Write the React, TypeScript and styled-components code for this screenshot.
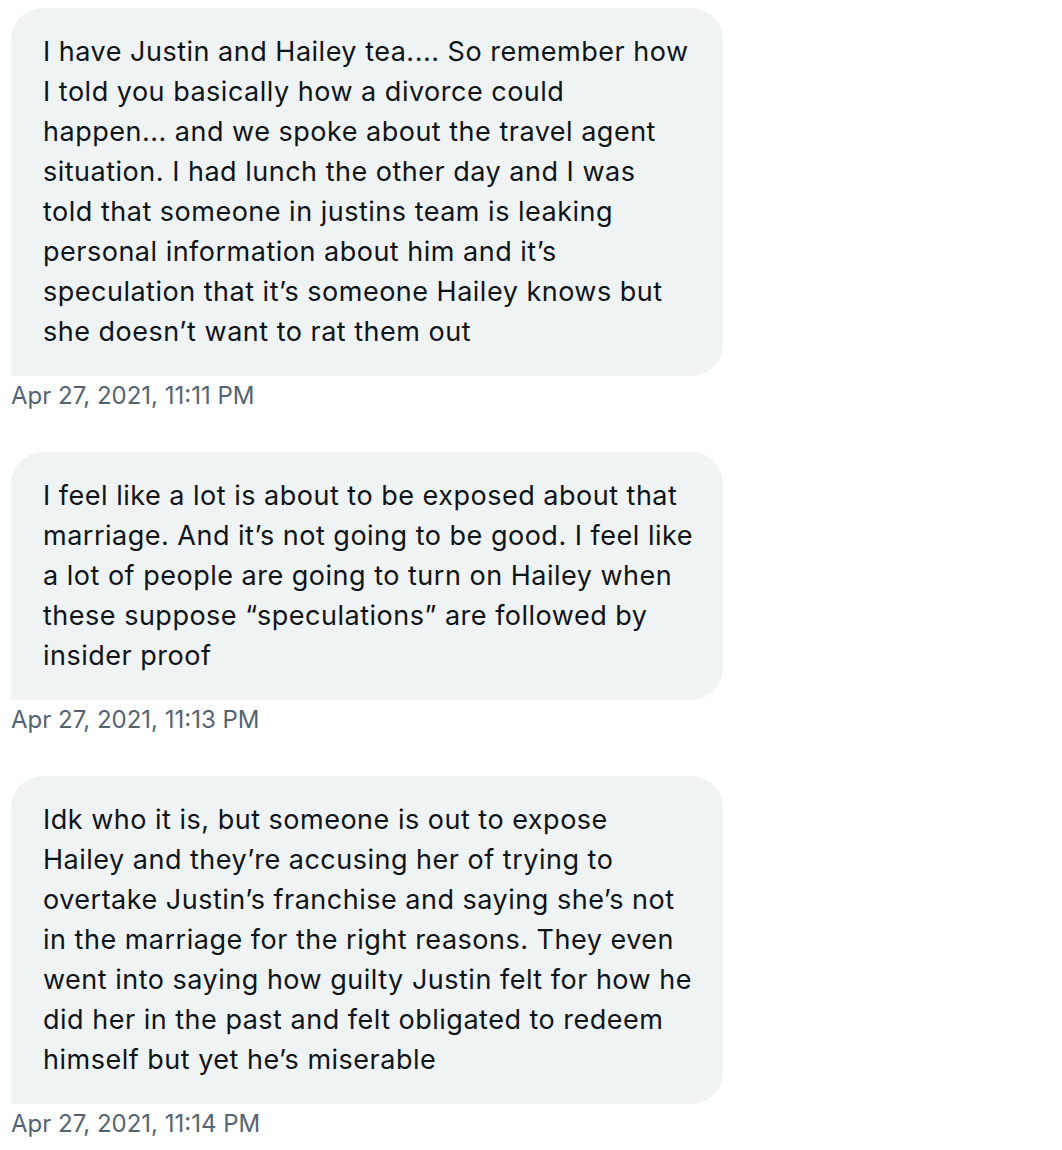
import React from 'react';
import styled, { createGlobalStyle } from 'styled-components';

const GlobalStyle = createGlobalStyle`
  body {
    margin: 0;
    background: #ffffff;
    font-family: Inter, "Liberation Sans", Arial, sans-serif;
  }
`;

const Thread = styled.div`
  display: flex;
  flex-direction: column;
  align-items: flex-start;
  padding: 8px 0 0 11px;
  gap: 36px;
`;

const Message = styled.div`
  display: flex;
  flex-direction: column;
  align-items: flex-start;
`;

const Bubble = styled.div`
  width: 712px;
  box-sizing: border-box;
  padding: 24px 32px;
  background: #eff3f4;
  border-radius: 32px 32px 32px 0;
  color: #0f1419;
  font-size: 27px;
  line-height: 40px;
  letter-spacing: 0.5px;
`;

const Line = styled.div`
  white-space: nowrap;
`;

const Stamp = styled.div`
  color: #536471;
  font-size: 24px;
  line-height: 40px;
`;

const messages = [
  {
    lines: [
      'I have Justin and Hailey tea.... So remember how',
      'I told you basically how a divorce could',
      'happen... and we spoke about the travel agent',
      'situation. I had lunch the other day and I was',
      'told that someone in justins team is leaking',
      'personal information about him and it\u2019s',
      'speculation that it\u2019s someone Hailey knows but',
      'she doesn\u2019t want to rat them out',
    ],
    time: 'Apr 27, 2021, 11:11 PM',
  },
  {
    lines: [
      'I feel like a lot is about to be exposed about that',
      'marriage. And it\u2019s not going to be good. I feel like',
      'a lot of people are going to turn on Hailey when',
      'these suppose \u201cspeculations\u201d are followed by',
      'insider proof',
    ],
    time: 'Apr 27, 2021, 11:13 PM',
  },
  {
    lines: [
      'Idk who it is, but someone is out to expose',
      'Hailey and they\u2019re accusing her of trying to',
      'overtake Justin\u2019s franchise and saying she\u2019s not',
      'in the marriage for the right reasons. They even',
      'went into saying how guilty Justin felt for how he',
      'did her in the past and felt obligated to redeem',
      'himself but yet he\u2019s miserable',
    ],
    time: 'Apr 27, 2021, 11:14 PM',
  },
];

export default function App() {
  return (
    <>
      <GlobalStyle />
      <Thread>
        {messages.map((m, i) => (
          <Message key={i}>
            <Bubble>
              {m.lines.map((l, j) => (
                <Line key={j}>{l}</Line>
              ))}
            </Bubble>
            <Stamp>{m.time}</Stamp>
          </Message>
        ))}
      </Thread>
    </>
  );
}
